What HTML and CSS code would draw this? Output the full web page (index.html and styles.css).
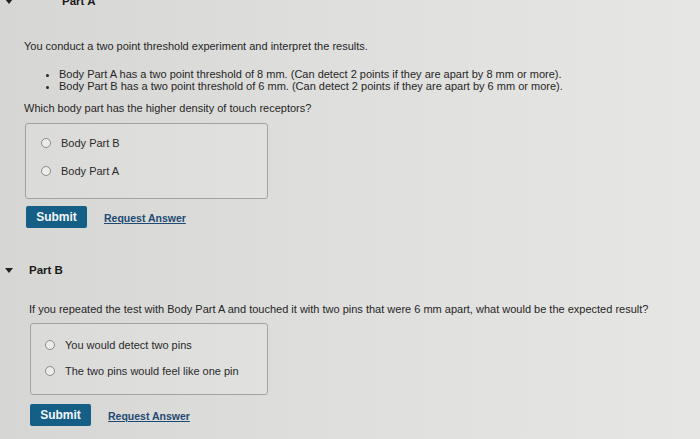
FILE: index.html
```html
<!DOCTYPE html>
<html lang="en">

<head>
    <meta charset="UTF-8">
    <meta name="viewport" content="width=device-width, initial-scale=1.0">
    <title>Two Point Threshold</title>
    <link rel="stylesheet" href="styles.css">
</head>

<body>
    <div class="part part-a">
        <div class="part-head">
            <span class="caret"></span>
            <span class="part-title">Part A</span>
        </div>
        <div class="part-body">
            <p class="intro">You conduct a two point threshold experiment and interpret the results.</p>
            <ul class="facts">
                <li>Body Part A has a two point threshold of 8 mm. (Can detect 2 points if they are apart by 8 mm or more).</li>
                <li>Body Part B has a two point threshold of 6 mm. (Can detect 2 points if they are apart by 6 mm or more).</li>
            </ul>
            <p class="question">Which body part has the higher density of touch receptors?</p>
            <div class="choices">
                <label class="choice"><input type="radio" name="partA" value="b"> Body Part B</label>
                <label class="choice"><input type="radio" name="partA" value="a"> Body Part A</label>
            </div>
            <div class="actions">
                <button class="submit" type="button">Submit</button>
                <a class="request" href="#">Request Answer</a>
            </div>
        </div>
    </div>

    <div class="part part-b">
        <div class="part-head">
            <span class="caret"></span>
            <span class="part-title">Part B</span>
        </div>
        <div class="part-body">
            <p class="question">If you repeated the test with Body Part A and touched it with two pins that were 6 mm apart, what would be the expected result?</p>
            <div class="choices">
                <label class="choice"><input type="radio" name="partB" value="two"> You would detect two pins</label>
                <label class="choice"><input type="radio" name="partB" value="one"> The two pins would feel like one pin</label>
            </div>
            <div class="actions">
                <button class="submit" type="button">Submit</button>
                <a class="request" href="#">Request Answer</a>
            </div>
        </div>
    </div>
</body>

</html>
```
FILE: styles.css
```css
body {
    margin: 0;
    padding: 0;
    height: 439px;
    overflow: hidden;
    background: linear-gradient(90deg, #d6d6d4 0%, #dfdfdd 50%, #e6e6e4 100%);
    color: #262626;
    font-family: "Liberation Sans", Arial, sans-serif;
    font-size: 11px;
    line-height: 12px;
}

p {
    margin: 0;
}

.part-head {
    display: flex;
    align-items: center;
    height: 14px;
    padding-left: 5px;
}

.caret {
    width: 0;
    height: 0;
    border-left: 4px solid transparent;
    border-right: 4px solid transparent;
    border-top: 5px solid #222;
}

.part-title {
    font-size: 11.5px;
    font-weight: bold;
    color: #1a1a1a;
}

/* part A sits half cut off at the top */
.part-a .part-head {
    margin-top: -6px;
}

.part-a .part-title {
    margin-left: 49px;
}

.part-a .part-body {
    padding-left: 24px;
}

.part-b .part-head {
    margin-top: 35px;
}

.part-b .part-title {
    margin-left: 16px;
}

.part-b .part-body {
    padding-left: 29px;
}

.intro {
    margin-top: 32px;
}

.facts {
    margin: 16px 0 0;
    padding-left: 35px;
}

.part-a .question {
    margin-top: 10px;
}

.part-b .question {
    margin-top: 26px;
}

.choices {
    display: flex;
    flex-direction: column;
    gap: 14px;
    box-sizing: border-box;
    width: 243px;
    margin: 9px 0 0 1px;
    padding: 12px 0 20px 15px;
    border: 1px solid #a3a3a1;
    border-radius: 3px;
    background-color: rgba(255, 255, 255, 0.12);
}

.part-b .choices {
    width: 238px;
    margin-top: 8px;
    gap: 12px;
    padding: 14px 0 16px 14px;
}

.choice {
    display: flex;
    align-items: center;
    height: 14px;
    color: #2a2a2a;
}

.choice input[type="radio"] {
    appearance: none;
    width: 10px;
    height: 10px;
    margin: 0 10px 0 0;
    border: 1px solid #8c8c8a;
    border-radius: 50%;
    background-color: #ecece9;
}

.actions {
    display: flex;
    align-items: center;
    gap: 17px;
    margin: 7px 0 0 2px;
}

.part-b .actions {
    margin: 9px 0 0 1px;
}

.submit {
    width: 61px;
    height: 22px;
    padding: 0;
    border: none;
    border-radius: 2px;
    background-color: #155f86;
    color: #f2f6f8;
    font-family: "Liberation Sans", Arial, sans-serif;
    font-size: 12px;
    font-weight: bold;
    cursor: pointer;
}

.request {
    margin-top: 2px;
    color: #1f4a73;
    font-size: 10.5px;
    font-weight: bold;
    text-decoration: underline;
}
```
